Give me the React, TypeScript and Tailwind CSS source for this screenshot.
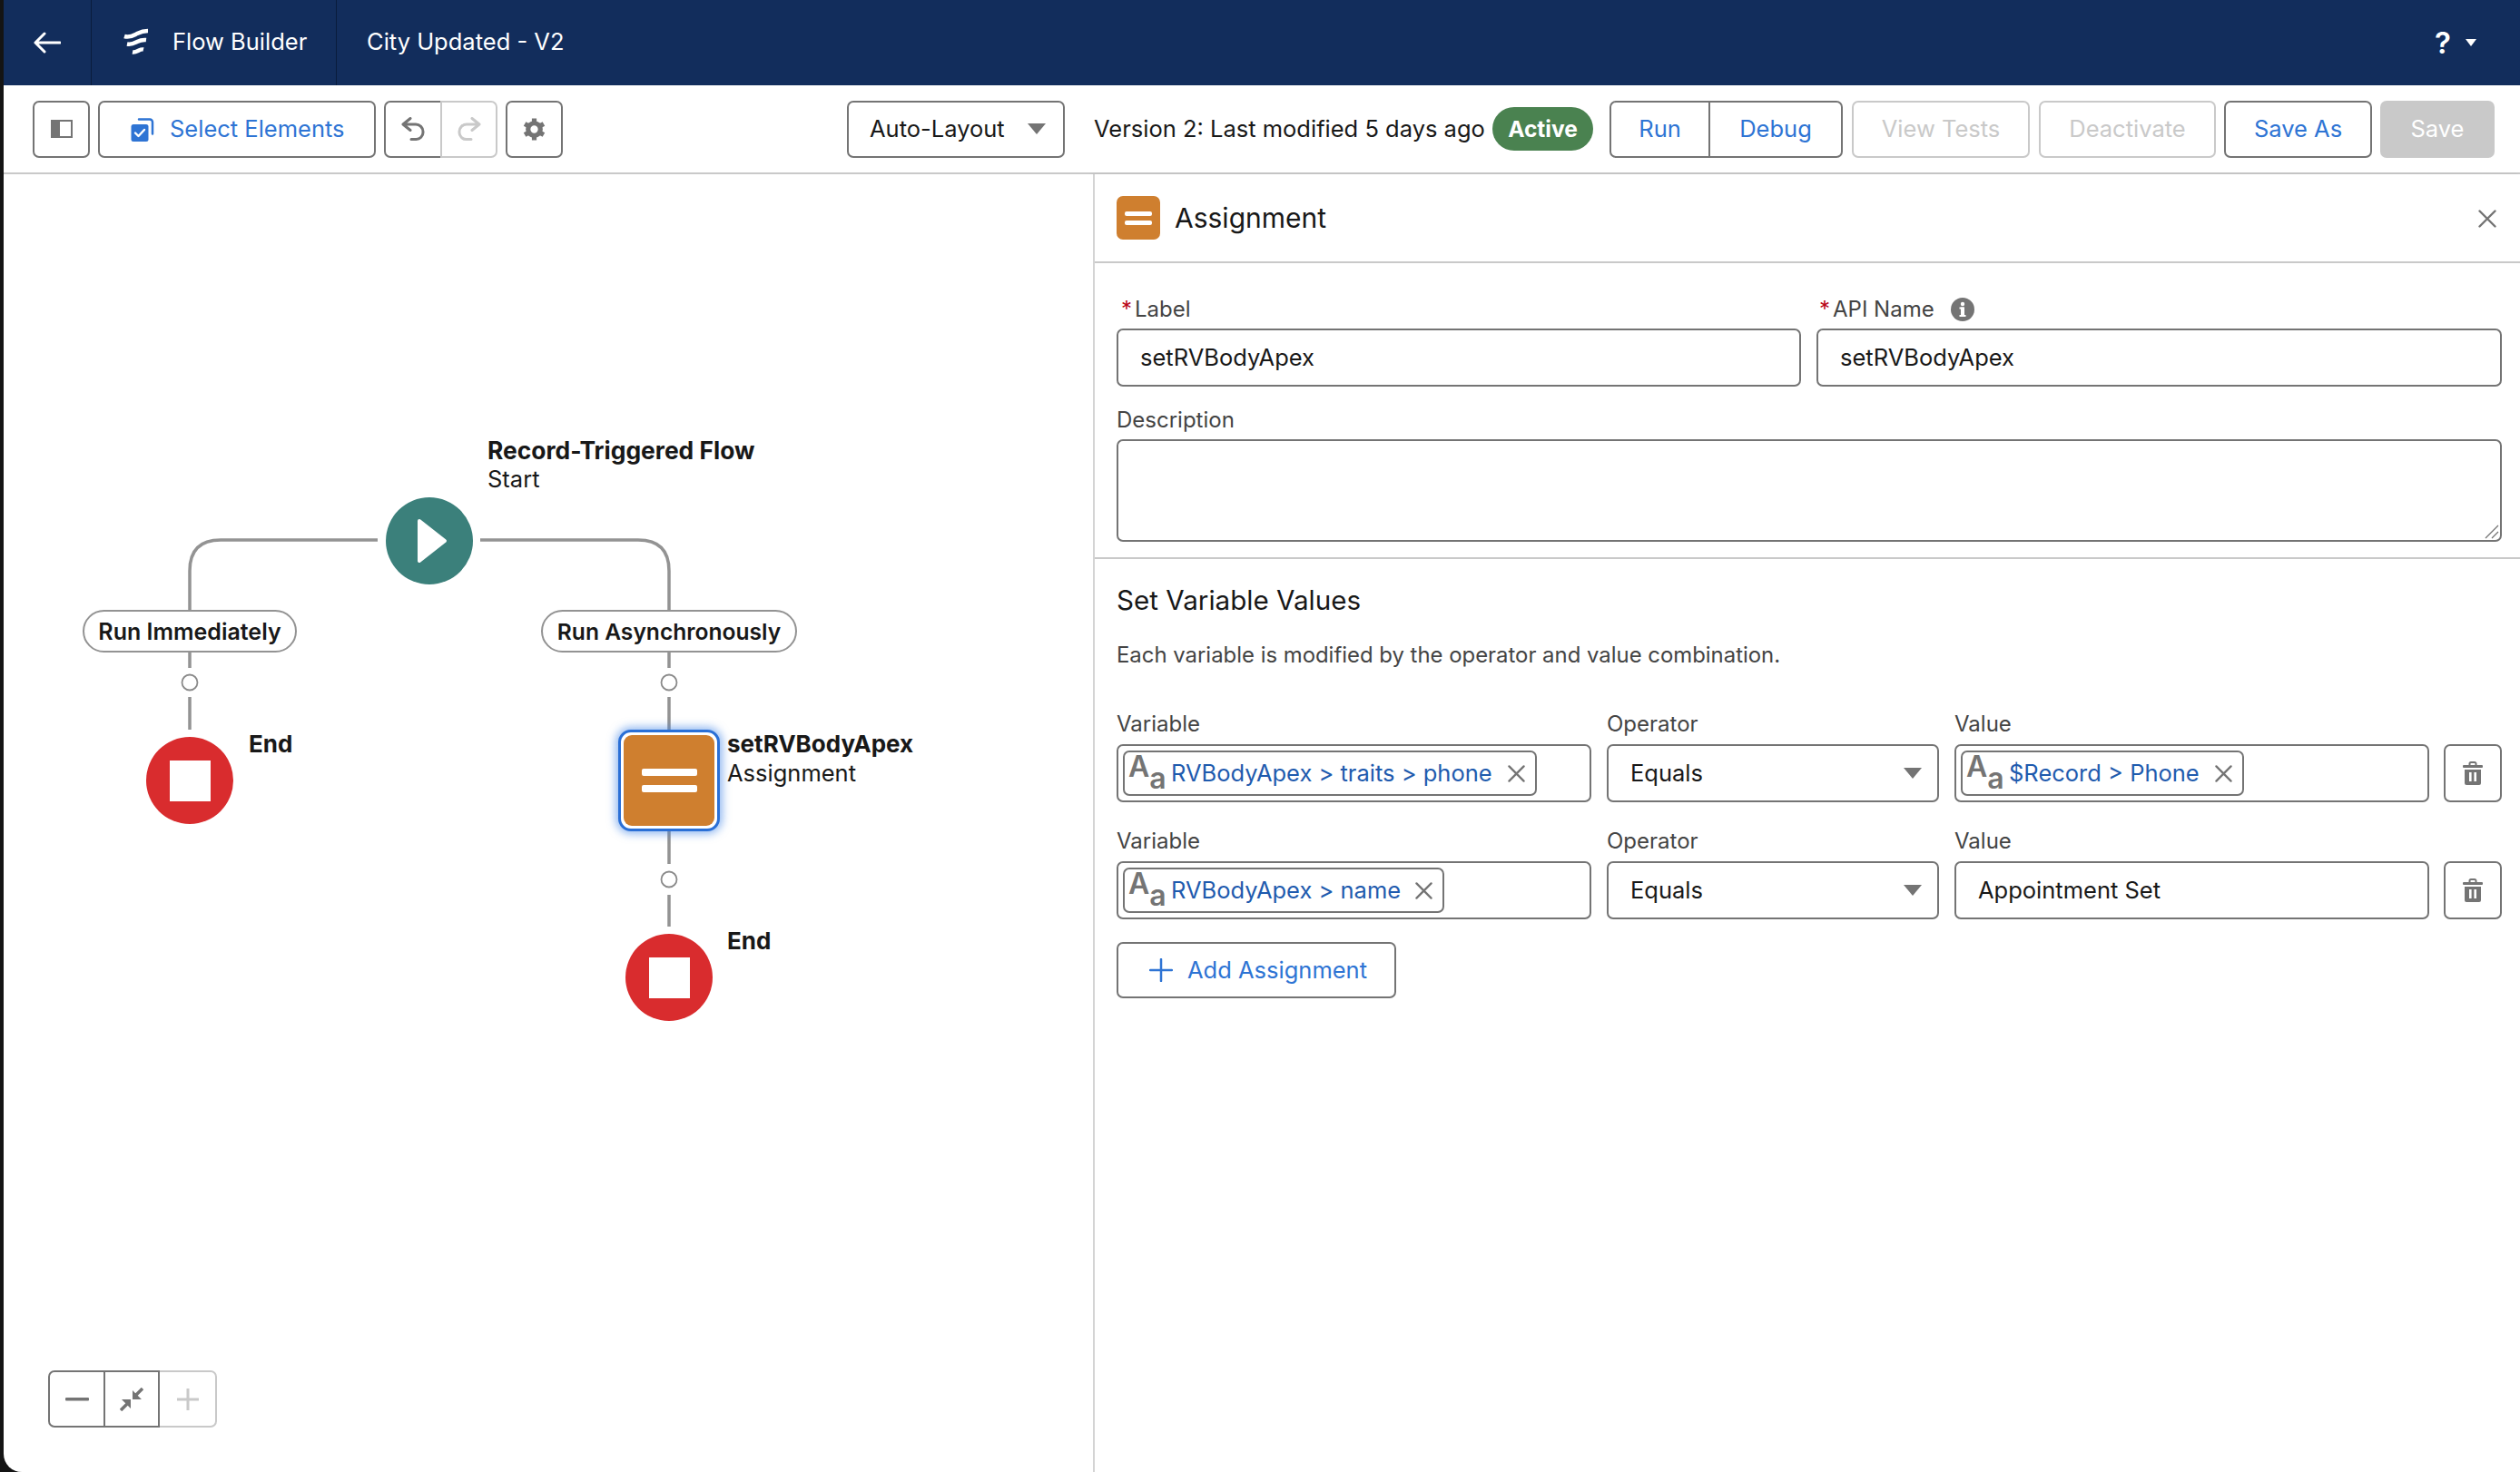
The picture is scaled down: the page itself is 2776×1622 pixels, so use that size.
import React from "react";

const labelCls = "text-[24px] leading-[30px] text-[#444444]";
const fieldCls = "border-2 border-[#747474] rounded-[7px] bg-white";

function Caret({ className = "" }: { className?: string }) {
  return (
    <svg width="22" height="14" viewBox="0 0 22 14" className={className}>
      <path d="M1 1h20L11 13z" fill="#747474" />
    </svg>
  );
}

function Cross({ size = 19, color = "#747474" }: { size?: number; color?: string }) {
  return (
    <svg width={size} height={size} viewBox="0 0 20 20" className="shrink-0">
      <path d="M1.5 1.5l17 17M18.5 1.5l-17 17" stroke={color} strokeWidth="2.4" strokeLinecap="round" />
    </svg>
  );
}

function TextTypeIcon() {
  return (
    <span className="w-[40px] h-[44px] shrink-0 flex items-start text-[32px] font-semibold text-[#747474]">
      <span className="h-[30px] leading-[30px]">A</span>
      <span className="mt-[13px] h-[30px] leading-[30px]">a</span>
    </span>
  );
}

function Pill({ text, width }: { text: string; width: string }) {
  return (
    <div className={`${width} h-[50px] flex items-center pl-[4px] border-2 border-[#747474] rounded-[7px]`}>
      <TextTypeIcon />
      <span className="ml-[7px] text-[25.5px] text-[#1f5bae] whitespace-nowrap">{text}</span>
      <span className="ml-auto mr-[11px]">
        <Cross />
      </span>
    </div>
  );
}

function Trash() {
  return (
    <button className="w-[64px] h-[64px] shrink-0 border-2 border-[#747474] rounded-[7px] flex items-center justify-center">
      <svg width="24" height="26" viewBox="0 0 24 26">
        <path d="M8.5 4V2.5A1.5 1.5 0 0 1 10 1h4a1.5 1.5 0 0 1 1.5 1.5V4" fill="none" stroke="#747474" strokeWidth="2" />
        <rect x="1" y="4" width="22" height="3" rx="1" fill="#747474" />
        <path d="M3 9h18v15a2 2 0 0 1-2 2H5a2 2 0 0 1-2-2z" fill="#747474" />
        <rect x="8" y="12" width="2.6" height="10" fill="white" />
        <rect x="13.4" y="12" width="2.6" height="10" fill="white" />
      </svg>
    </button>
  );
}

function Field({ label, width, children }: { label: string; width: string; children: React.ReactNode }) {
  return (
    <div className={width}>
      <div className={`${labelCls} mb-[7px]`}>{label}</div>
      {children}
    </div>
  );
}

function OperatorSelect() {
  return (
    <div className={`${fieldCls} h-[64px] flex items-center pl-[24px] pr-[16px] text-[25.5px] text-[#181818]`}>
      Equals
      <Caret className="ml-auto" />
    </div>
  );
}

function Canvas() {
  return (
    <div className="relative w-[1200px] h-full bg-white rounded-bl-[20px] overflow-hidden text-[25.5px] leading-[32px] text-[#181818]">
      <svg className="absolute inset-0" width="1200" height="1430" viewBox="4 193 1200 1430" fill="none">
        <g stroke="#939393" strokeWidth="3.5">
          <path d="M416 596H243Q209 596 209 630V673" />
          <path d="M529 596H703Q737 596 737 630V673" />
          <path d="M209 720V737M209 769V805M737 720V737M737 769V805M737 917V953M737 987V1022" />
        </g>
        <g stroke="#8a8a8a" strokeWidth="1.8" fill="white">
          <circle cx="209" cy="753" r="8.5" />
          <circle cx="737" cy="753" r="8.5" />
          <circle cx="737" cy="970" r="8.5" />
        </g>
      </svg>

      {/* start node */}
      <div className="absolute left-[421px] top-[356px] w-[96px] h-[96px] rounded-full bg-[#3b807b] flex items-center justify-center">
        <svg width="34" height="50" viewBox="0 0 34 50" className="ml-[5px]">
          <path d="M3 3l28 22L3 47z" fill="white" stroke="white" strokeWidth="4" strokeLinejoin="round" />
        </svg>
      </div>
      <div className="absolute left-[533px] top-[288px] whitespace-nowrap">
        <div className="font-bold text-[26.4px]">Record-Triggered Flow</div>
        <div>Start</div>
      </div>

      {/* decision labels */}
      <div className="absolute left-[87px] top-[480px] w-[236px] h-[47px] border-2 border-[#939393] rounded-full bg-white flex items-center justify-center font-semibold text-[25px] whitespace-nowrap">
        Run Immediately
      </div>
      <div className="absolute left-[592px] top-[480px] w-[282px] h-[47px] border-2 border-[#939393] rounded-full bg-white flex items-center justify-center font-semibold text-[24.6px] whitespace-nowrap">
        Run Asynchronously
      </div>

      {/* left end */}
      <div className="absolute left-[157px] top-[620px] w-[96px] h-[96px] rounded-full bg-[#d92c2e] flex items-center justify-center">
        <div className="w-[45px] h-[45px] bg-white" />
      </div>
      <div className="absolute left-[270px] top-[612px] font-bold text-[26px]">End</div>

      {/* assignment node */}
      <div className="absolute left-[677px] top-[612px] w-[112px] h-[112px] rounded-[14px] border-[3px] border-[#2a6fd6] bg-white shadow-[0_0_10px_3px_rgba(60,130,230,0.55)] flex items-center justify-center">
        <div className="w-[100px] h-[100px] rounded-[9px] bg-[#cf7f2f] flex flex-col items-center justify-center gap-[10px]">
          <div className="w-[61px] h-[8px] rounded-[2px] bg-white" />
          <div className="w-[61px] h-[8px] rounded-[2px] bg-white" />
        </div>
      </div>
      <div className="absolute left-[797px] top-[612px] whitespace-nowrap">
        <div className="font-bold text-[26px]">setRVBodyApex</div>
        <div>Assignment</div>
      </div>

      {/* right end */}
      <div className="absolute left-[685px] top-[837px] w-[96px] h-[96px] rounded-full bg-[#d92c2e] flex items-center justify-center">
        <div className="w-[45px] h-[45px] bg-white" />
      </div>
      <div className="absolute left-[797px] top-[829px] font-bold text-[26px]">End</div>

      {/* zoom controls */}
      <div className="absolute left-[49px] top-[1318px] flex h-[63px]">
        <button className="w-[63px] border-2 border-[#747474] rounded-l-[7px] flex items-center justify-center">
          <svg width="26" height="4" viewBox="0 0 26 4"><rect width="26" height="3.5" rx="1" fill="#747474" /></svg>
        </button>
        <button className="w-[60px] border-y-2 border-r-2 border-[#747474] flex items-center justify-center">
          <svg width="26" height="26" viewBox="0 0 26 26">
            <path d="M25 1l-8 8M8 18l-7 7" stroke="#747474" strokeWidth="3.5" />
            <path d="M14 3v10h10zM12 23V13H2z" fill="#747474" />
          </svg>
        </button>
        <button className="w-[63px] border-y-2 border-r-2 border-[#c9c9c9] rounded-r-[7px] flex items-center justify-center">
          <svg width="24" height="24" viewBox="0 0 24 24"><path d="M12 0v24M0 12h24" stroke="#c9c9c9" strokeWidth="3" /></svg>
        </button>
      </div>
    </div>
  );
}

export default function App() {
  return (
    <div className="w-[2776px] h-[1622px] flex flex-col border-l-4 border-[#141414] bg-white overflow-hidden font-['Inter',sans-serif] text-[#181818]">
      {/* header */}
      <header className="h-[94px] shrink-0 bg-[#122d5c] text-white flex items-stretch text-[25.5px] leading-[32px]">
        <div className="w-[97px] border-r border-[#0a1c3c] flex items-center pl-[33px]">
          <svg width="30" height="24" viewBox="0 0 30 24" fill="none">
            <path d="M29 12H2M12 2L2 12l10 10" stroke="white" strokeWidth="3" strokeLinecap="round" strokeLinejoin="round" />
          </svg>
        </div>
        <div className="w-[270px] border-r border-[#0a1c3c] flex items-center pl-[34px] pb-[2px]">
          <svg width="30" height="30" viewBox="0 0 30 30" fill="none" stroke="white" strokeWidth="4.500">
            <path d="M2 9C8 11 12 8 16 6C20 4 23 3 28 3" />
            <path d="M5 17.500C10 18.500 13 16.500 16 15C19 13.500 22 12.500 26 13" />
            <path d="M11 26.500C14 27 16 25.500 18 24.500C20 23.500 21 23 23 23.500" />
          </svg>
          <span className="ml-[25px] whitespace-nowrap">Flow Builder</span>
        </div>
        <div className="flex items-center pl-[33px] pb-[2px] whitespace-nowrap">City Updated - V2</div>
        <div className="ml-auto flex items-center pr-[48px]">
          <span className="text-[33px] font-semibold">?</span>
          <svg width="12" height="8" viewBox="0 0 12 8" className="ml-[16px]"><path d="M0 0h12L6 8z" fill="white" /></svg>
        </div>
      </header>

      {/* toolbar */}
      <div className="h-[98px] shrink-0 border-b-2 border-[#c9c9c9] flex items-center pl-[32px] pr-[28px] text-[25.5px]">
        <button className="w-[63px] h-[63px] border-2 border-[#747474] rounded-[7px] flex items-center justify-center">
          <svg width="24" height="20" viewBox="0 0 24 20">
            <rect x="1" y="1" width="22" height="18" fill="white" stroke="#747474" strokeWidth="2" />
            <rect x="2" y="2" width="8" height="16" fill="#747474" />
          </svg>
        </button>
        <button className="ml-[9px] w-[306px] h-[63px] border-2 border-[#747474] rounded-[7px] flex items-center pl-[34px] text-[#2e74d4]">
          <svg width="26" height="27" viewBox="0 0 26 27" className="shrink-0">
            <path d="M9 2.500h12a3 3 0 0 1 3 3v13" fill="none" stroke="#2e74d4" strokeWidth="2.500" strokeLinecap="round" />
            <rect x="0.500" y="8" width="19" height="19" rx="2.500" fill="#2e74d4" />
            <path d="M5 17.500l3.500 3.500 6.500-7" fill="none" stroke="white" strokeWidth="2.400" strokeLinecap="round" strokeLinejoin="round" />
          </svg>
          <span className="ml-[17px] whitespace-nowrap">Select Elements</span>
        </button>
        <div className="ml-[9px] flex h-[63px]">
          <button className="w-[62px] border-2 border-r-0 border-[#747474] rounded-l-[7px] flex items-center justify-center">
            <svg width="26" height="26" viewBox="0 0 26 26" fill="none">
              <path d="M10 1.500L2 8l8 6.500M2.500 8H16a8 8 0 0 1 8 8v1a7.500 7.500 0 0 1-7.500 7.500H11" stroke="#747474" strokeWidth="3" strokeLinecap="round" strokeLinejoin="round" />
            </svg>
          </button>
          <button className="w-[63px] border-2 border-[#c9c9c9] rounded-r-[7px] flex items-center justify-center">
            <svg width="26" height="26" viewBox="0 0 26 26" fill="none">
              <path d="M16 1.500L24 8l-8 6.500M23.500 8H10a8 8 0 0 0-8 8v1a7.500 7.500 0 0 0 7.500 7.500H15" stroke="#c9c9c9" strokeWidth="3" strokeLinecap="round" strokeLinejoin="round" />
            </svg>
          </button>
        </div>
        <button className="ml-[9px] w-[63px] h-[63px] border-2 border-[#747474] rounded-[7px] flex items-center justify-center">
          <svg width="25" height="25" viewBox="0 0 24 24" fill="none">
            <circle cx="12" cy="12" r="6.500" stroke="#747474" strokeWidth="5" />
            <g stroke="#747474" strokeWidth="5">
              <path d="M12 0.500v4M12 19.500v4" />
              <path d="M2 6.250l3.500 2M18.500 15.750l3.500 2" />
              <path d="M2 17.750l3.500-2M18.500 8.250l3.500-2" />
            </g>
          </svg>
        </button>

        <div className="ml-auto w-[240px] h-[63px] border-2 border-[#747474] rounded-[7px] flex items-center pl-[23px] pr-[18px]">
          <span className="whitespace-nowrap">Auto-Layout</span>
          <Caret className="ml-auto" />
        </div>
        <span className="ml-[32px] w-[428px] whitespace-nowrap">Version 2: Last modified 5 days ago</span>
        <span className="ml-[11px] w-[111px] h-[48px] rounded-full bg-[#4a8250] text-white text-[24.5px] font-bold flex items-center justify-center">Active</span>
        <div className="ml-[18px] flex h-[63px] text-[#2e74d4]">
          <button className="w-[111px] border-2 border-[#747474] rounded-l-[7px]">Run</button>
          <button className="w-[146px] border-y-2 border-r-2 border-[#747474] rounded-r-[7px]">Debug</button>
        </div>
        <button className="ml-[10px] w-[196px] h-[63px] border-2 border-[#c9c9c9] rounded-[7px] text-[#c9c9c9]">View Tests</button>
        <button className="ml-[10px] w-[195px] h-[63px] border-2 border-[#c9c9c9] rounded-[7px] text-[#c9c9c9]">Deactivate</button>
        <button className="ml-[9px] w-[163px] h-[63px] border-2 border-[#747474] rounded-[7px] text-[#2e74d4]">Save As</button>
        <button className="ml-[9px] w-[126px] h-[63px] rounded-[7px] bg-[#c9c9c9] text-white">Save</button>
      </div>

      {/* body */}
      <div className="flex-1 flex min-h-0 bg-[#141414]">
        <Canvas />
        <aside className="flex-1 bg-white border-l-2 border-[#d4d4d4] shadow-[-2px_0_3px_rgba(0,0,0,0.08)] text-[25.5px] text-[#181818]">
          <div className="h-[98px] border-b-2 border-[#c9c9c9] flex items-center pl-[24px] pr-[20px]">
            <div className="w-[48px] h-[48px] rounded-[7px] bg-[#cf7f2f] flex flex-col items-center justify-center gap-[5px]">
              <div className="w-[30px] h-[5px] rounded-[2px] bg-white" />
              <div className="w-[30px] h-[5px] rounded-[2px] bg-white" />
            </div>
            <span className="ml-[16px] text-[30px]">Assignment</span>
            <span className="ml-auto mr-[6px] mt-[2px]">
              <Cross size={20} />
            </span>
          </div>

          <div className="pl-[24px] pr-[20px] pb-[17px] border-b-2 border-[#c9c9c9]">
            <div className="flex gap-[17px] pt-[36px]">
              <div className="w-[754px]">
                <div className={`${labelCls} mb-[6px] pl-[5px]`}><span className="text-[#ba0517] mr-[3px]">*</span>Label</div>
                <div className={`${fieldCls} h-[64px] flex items-center pl-[24px]`}>setRVBodyApex</div>
              </div>
              <div className="flex-1">
                <div className={`${labelCls} mb-[6px] pl-[3px] flex items-center`}>
                  <span className="text-[#ba0517] mr-[3px]">*</span>API Name
                  <svg width="26" height="26" viewBox="0 0 26 26" className="ml-[18px]">
                    <circle cx="13" cy="13" r="13" fill="#747474" />
                    <rect x="11" y="10.500" width="4" height="10" fill="white" />
                    <rect x="9.500" y="10.500" width="5" height="2" fill="white" />
                    <rect x="9.500" y="19" width="7" height="2" fill="white" />
                    <circle cx="13" cy="7" r="2.200" fill="white" />
                  </svg>
                </div>
                <div className={`${fieldCls} h-[64px] flex items-center pl-[24px]`}>setRVBodyApex</div>
              </div>
            </div>
            <div className={`${labelCls} mt-[22px] mb-[6px]`}>Description</div>
            <div className={`${fieldCls} h-[113px] relative`}>
              <svg width="16" height="16" viewBox="0 0 16 16" className="absolute right-[1px] bottom-[1px]">
                <path d="M1 15L15 1M8 15l7-7" stroke="#747474" strokeWidth="1.300" />
              </svg>
            </div>
          </div>

          <div className="pl-[24px] pr-[20px]">
            <div className="mt-[25px] h-[40px] leading-[40px] text-[29.6px]">Set Variable Values</div>
            <div className="mt-[26px] h-[30px] leading-[30px] text-[23.9px] text-[#444444]">Each variable is modified by the operator and value combination.</div>

            <div className="flex items-end mt-[46px]">
              <Field label="Variable" width="w-[523px]">
                <div className={`${fieldCls} h-[64px] flex items-center pl-[5px]`}>
                  <Pill text="RVBodyApex > traits > phone" width="w-[456px]" />
                </div>
              </Field>
              <Field label="Operator" width="w-[366px] ml-[17px]"><OperatorSelect /></Field>
              <Field label="Value" width="w-[523px] ml-[17px]">
                <div className={`${fieldCls} h-[64px] flex items-center pl-[5px]`}>
                  <Pill text="$Record > Phone" width="w-[312px]" />
                </div>
              </Field>
              <div className="ml-[16px]"><Trash /></div>
            </div>

            <div className="flex items-end mt-[28px]">
              <Field label="Variable" width="w-[523px]">
                <div className={`${fieldCls} h-[64px] flex items-center pl-[5px]`}>
                  <Pill text="RVBodyApex > name" width="w-[354px]" />
                </div>
              </Field>
              <Field label="Operator" width="w-[366px] ml-[17px]"><OperatorSelect /></Field>
              <Field label="Value" width="w-[523px] ml-[17px]">
                <div className={`${fieldCls} h-[64px] flex items-center pl-[24px]`}>Appointment Set</div>
              </Field>
              <div className="ml-[16px]"><Trash /></div>
            </div>

            <button className="mt-[25px] w-[308px] h-[62px] border-2 border-[#747474] rounded-[7px] flex items-center pl-[34px] text-[#2e74d4]">
              <svg width="26" height="26" viewBox="0 0 26 26" className="shrink-0"><path d="M13 1v24M1 13h24" stroke="#2e74d4" strokeWidth="2.500" strokeLinecap="round" /></svg>
              <span className="ml-[16px] whitespace-nowrap">Add Assignment</span>
            </button>
          </div>
        </aside>
      </div>
    </div>
  );
}
